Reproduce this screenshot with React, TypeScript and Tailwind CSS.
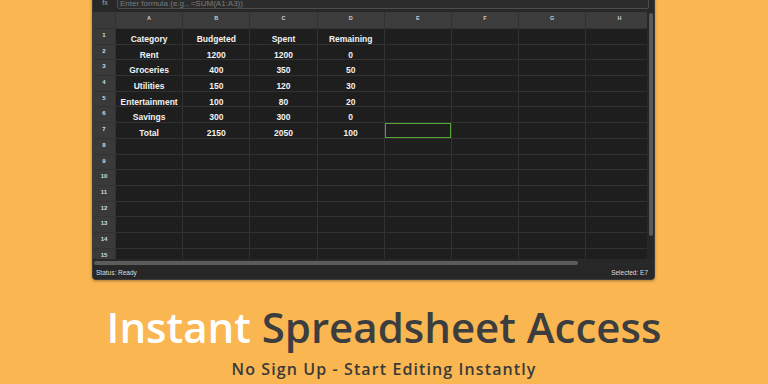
import React from "react";

const cols = ["A", "B", "C", "D", "E", "F", "G", "H"];
const data: string[][] = [
  ["Category", "Budgeted", "Spent", "Remaining"],
  ["Rent", "1200", "1200", "0"],
  ["Groceries", "400", "350", "50"],
  ["Utilities", "150", "120", "30"],
  ["Entertainment", "100", "80", "20"],
  ["Savings", "300", "300", "0"],
  ["Total", "2150", "2050", "100"],
];

export default function App() {
  const rows = Array.from({ length: 15 }, (_, i) => i);
  return (
    <div
      className="w-[768px] h-[384px] overflow-hidden bg-[#f9b651] flex flex-col"
      style={{ fontFamily: '"Liberation Sans", Arial, sans-serif' }}
    >
      {/* window */}
      <div className="shrink-0 ml-[92px] mt-[-9px] w-[563px] flex flex-col bg-[#262626] border border-[#3c3c3c] rounded-b-[4px] shadow-[0_1px_3px_rgba(0,0,0,0.35)] overflow-hidden">
        {/* formula bar */}
        <div className="h-[20px] flex items-end pb-[3px] bg-[#282828]">
          <div className="w-[24px] flex justify-center items-center h-[11px] text-[7px] text-[#a8a8a8]">fx</div>
          <div className="w-[532px] h-[14px] border border-[#4c4c4c] bg-[#2c2c2c] rounded-[2px] flex items-center pl-[2px] pt-[4px] text-[8px] text-[#7a7a7a] leading-none">
            Enter formula (e.g., =SUM(A1:A3))
          </div>
        </div>
        {/* grid + vertical scrollbar */}
        <div className="flex h-[247px]">
          <div className="w-[554px] h-[247px] overflow-hidden">
            <div className="grid grid-cols-[22px_repeat(8,66.2px)] grid-rows-[16px_repeat(15,14.7px)] gap-px bg-[#323232] w-max">
              <div className="bg-[#3a3a3a]" />
              {cols.map((c) => (
                <div key={c} className="bg-[#3c3c3c] flex justify-center pt-[3px] text-[5.5px] leading-[6px] font-bold text-[#cfcfcf]">
                  {c}
                </div>
              ))}
              {rows.map((r) => (
                <React.Fragment key={r}>
                  <div className="bg-[#3a3a3a] flex justify-center pt-[3px] text-[6px] leading-[6px] font-bold text-[#dcdcdc]">
                    {r + 1}
                  </div>
                  {cols.map((c, ci) => {
                    const v = data[r]?.[ci] ?? "";
                    const sel = r === 6 && ci === 4;
                    return (
                      <div
                        key={c}
                        className={
                          sel
                            ? "bg-[#1e1e1e] border-[1.5px] border-[#55a536]"
                            : "bg-[#1e1e1e] flex justify-center pt-[5px] text-[8.5px] leading-[10px] font-bold text-[#f2f2f2] whitespace-nowrap"
                        }
                      >
                        {v}
                      </div>
                    );
                  })}
                </React.Fragment>
              ))}
            </div>
          </div>
          <div className="flex-1 bg-[#262626] flex justify-center pt-[1px]">
            <div className="w-[4px] h-[223px] rounded-full bg-[#5a5a5a]" />
          </div>
        </div>
        {/* horizontal scrollbar */}
        <div className="h-[7px] bg-[#282828] pl-[1px] pt-[2px]">
          <div className="w-[484px] h-[4px] rounded-full bg-[#5c5c5c]" />
        </div>
        {/* status bar */}
        <div className="h-[13px] bg-[#272727] flex items-center justify-between px-[3px] text-[6.5px] text-[#dedede]">
          <span>Status: Ready</span>
          <span className="mr-[3px]">Selected: E7</span>
        </div>
      </div>
      {/* title */}
      <div
        className="shrink-0 mt-[22px] flex flex-col items-center"
        style={{ fontFamily: '"Open Sans", Lato, sans-serif' }}
      >
        <div className="text-[42px] leading-[50px] font-semibold text-[#3b3d3f] whitespace-nowrap">
          <span className="text-white">Instant</span> Spreadsheet Access
        </div>
        <div className="mt-[7px] text-[16px] leading-[20px] font-semibold tracking-[1.1px] text-[#3a3a3a] whitespace-nowrap">
          No Sign Up - Start Editing Instantly
        </div>
      </div>
    </div>
  );
}
